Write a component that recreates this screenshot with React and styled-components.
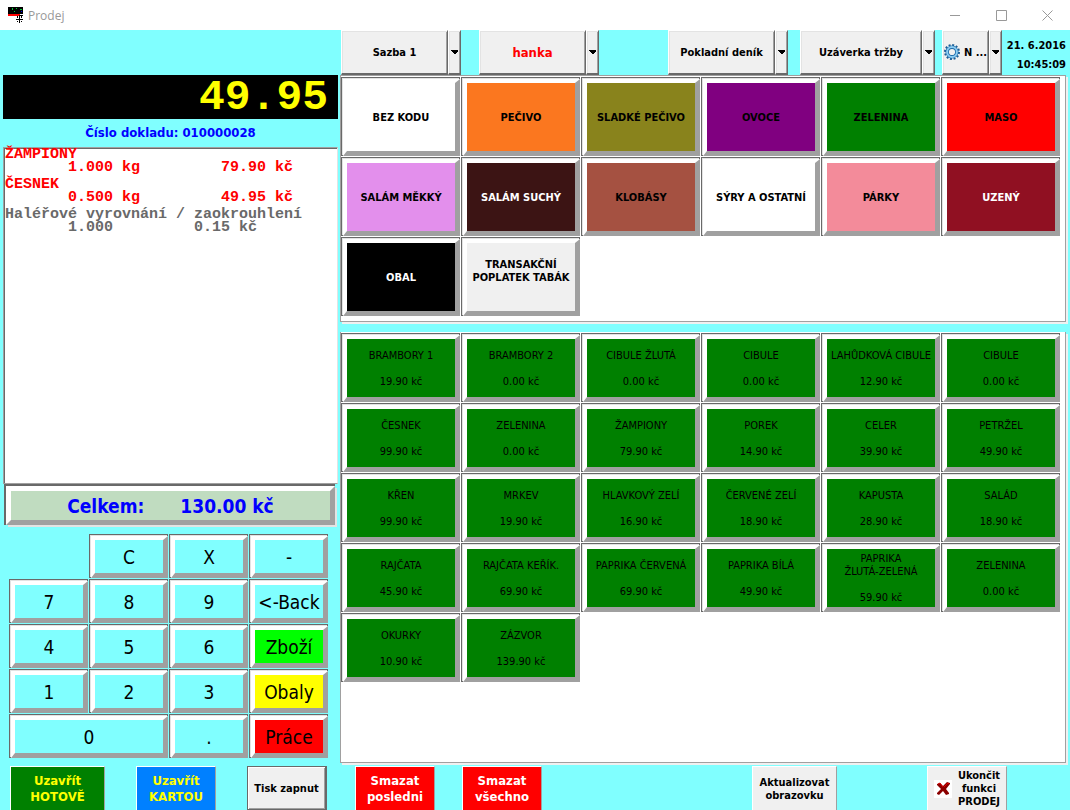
import React from "react";
import styled, { createGlobalStyle } from "styled-components";

const GlobalStyle = createGlobalStyle`
  * {
    box-sizing: border-box;
  }

  body {
    margin: 0;
    background: #80ffff;
    font-family: "DejaVu Sans Condensed", "DejaVu Sans", Tahoma, sans-serif;
    font-size: 11px;
    color: #000;
  }

  button {
    font-family: inherit;
    color: inherit;
    margin: 0;
    padding: 0;
    cursor: pointer;
  }
`;

const Window = styled.div`
  display: flex;
  flex-direction: column;
  min-height: 100vh;
`;

const TitleBar = styled.header`
  display: flex;
  align-items: center;
  height: 30px;
  padding-left: 8px;
  background: #fff;
`;

const Title = styled.h1`
  flex: 1;
  margin: 0;
  padding-left: 4px;
  font-family: "Open Sans", sans-serif;
  font-size: 12px;
  font-weight: 400;
  color: #999;
`;

const WindowButton = styled.button`
  display: flex;
  align-items: center;
  justify-content: center;
  width: 46px;
  height: 28px;
  border: none;
  background: transparent;
`;

const Main = styled.main`
  display: grid;
  grid-template-columns: 340px minmax(0, 1fr);
  flex: 1;
`;

const Left = styled.section`
  display: flex;
  flex-direction: column;
  padding: 45px 2px 8px 3px;
`;

const Right = styled.section`
  display: flex;
  flex-direction: column;
  padding: 0 4px 3px 0;
`;

const Display = styled.output`
  height: 44px;
  padding-right: 10px;
  background: #000;
  color: #ff0;
  font-family: "Liberation Mono", monospace;
  font-size: 43px;
  font-weight: 700;
  line-height: 46px;
  text-align: right;
`;

const DocNumber = styled.h2`
  margin: 0;
  font-size: 13px;
  line-height: 28px;
  color: #00f;
  text-align: center;
`;

const Receipt = styled.ul`
  flex: 1;
  margin: 0;
  padding: 0;
  list-style: none;
  background: #fff;
  border: 1px solid #a0a0a0;
  border-right-color: #e3e3e3;
  box-shadow: inset 1px 1px 0 #696969;
`;

const ReceiptItem = styled.li`
  height: 30px;
  padding-left: 1px;
  color: ${(props) => (props.$muted ? "#696969" : "#f00")};
  font-family: "Liberation Mono", monospace;
  font-size: 15px;
  font-weight: 700;
  line-height: 13px;
  white-space: pre;
`;

const Total = styled.div`
  display: flex;
  align-items: center;
  justify-content: center;
  gap: 36px;
  height: 39px;
  margin: 2px 3px 0;
  border: 5px solid;
  border-color: #fff #a0a0a0 #a0a0a0 #fff;
  background: #c0dcc0;
  box-shadow: -1px -1px 0 1px #696969, 2px 2px 0 #e3e3e3;
  color: #00f;
  font-size: 19px;
  font-weight: 700;
`;

const Keypad = styled.div`
  display: grid;
  grid-template-columns: repeat(4, 77px);
  grid-auto-rows: 42px;
  gap: 3px;
  margin: 11px 0 0 8px;
`;

const Bevel = styled.button`
  border: solid;
  border-width: 4px 5px 5px 4px;
  border-color: #fff #a0a0a0 #a0a0a0 #fff;
  border-radius: 0;
  background: ${(props) => props.$bg || "#80ffff"};
  box-shadow: -1px -1px 0 #e3e3e3, -1px -1px 0 1px #696969;
`;

const Key = styled(Bevel)`
  grid-column: ${(props) => props.$column || "auto"};
  font-size: 19px;
  white-space: nowrap;
`;

const Toolbar = styled.nav`
  display: flex;
  height: 45px;
  padding-left: 1px;
`;

const ToolGroup = styled.div`
  display: flex;
  gap: ${(props) => props.$gap}px;
  margin-left: ${(props) => (props.$end ? "auto" : "0")};
`;

const ToolEnd = styled.div`
  display: flex;
  padding-left: 7px;
`;

const Split = styled.div`
  display: flex;
  width: ${(props) => props.$width}px;
`;

const SplitButton = styled.button`
  display: flex;
  flex: 1;
  align-items: center;
  justify-content: center;
  gap: 4px;
  border: solid #696969;
  border-width: 1px 1px 2px;
  border-top-color: #fff;
  border-left-color: #fff;
  background: #f0f0f0;
  box-shadow: inset 1px 1px 0 #e3e3e3, inset -1px 0 0 #a0a0a0;
  color: ${(props) => props.$color || "#000"};
  font-size: ${(props) => (props.$large ? 13 : 11)}px;
  font-weight: 700;
  white-space: nowrap;
`;

const SplitArrow = styled(SplitButton)`
  flex: 0 0 13px;
`;

const Clock = styled.div`
  width: 64px;
  padding-top: 6px;
  font-size: 11px;
  font-weight: 700;
  line-height: 19px;
  text-align: right;
  white-space: nowrap;
`;

const Panel = styled.div`
  flex: ${(props) => (props.$grow ? "1" : "0 0 auto")};
  display: grid;
  grid-template-columns: repeat(auto-fill, 117px);
  grid-auto-rows: ${(props) => props.$row}px;
  align-content: start;
  gap: 3px;
  padding: 3px 0 5px 2px;
  border: 1px solid #a0a0a0;
  background: #fff;
  box-shadow: 2px 2px 0 #f0f0f0;
`;

const ProductPanel = styled(Panel)`
  border-top: none;
  margin-top: 10px;
`;

const Tile = styled(Bevel)`
  display: flex;
  flex-direction: column;
  align-items: center;
  justify-content: center;
  gap: 13px;
  color: ${(props) => (props.$light ? "#fff" : "#000")};
  font-size: 11px;
  font-weight: ${(props) => (props.$bold ? 700 : 400)};
  line-height: 13px;
  white-space: pre;
`;

const Footer = styled.footer`
  display: grid;
  grid-template-columns: 340px minmax(0, 1fr);
  height: 44px;
`;

const FooterLeft = styled.div`
  display: flex;
  justify-content: space-between;
  padding: 0 13px 0 10px;
`;

const FooterRight = styled.div`
  display: flex;
  justify-content: space-between;
  padding: 0 63px 0 15px;
`;

const FooterGroup = styled.div`
  display: flex;
  gap: ${(props) => props.$gap}px;
`;

const Action = styled.button`
  display: flex;
  align-items: center;
  justify-content: center;
  gap: 6px;
  width: ${(props) => props.$width || 80}px;
  border: solid;
  border-width: 1px 1px 0;
  border-color: #fff #a0a0a0 #a0a0a0 #fff;
  background: ${(props) => props.$bg || "#f0f0f0"};
  color: ${(props) => props.$color || "#000"};
  font-size: ${(props) => (props.$large ? 13 : 11)}px;
  font-weight: 700;
  line-height: ${(props) => (props.$large ? 16 : 13)}px;
  text-align: center;
  white-space: pre;
`;

const PrintAction = styled(Action)`
  border: 1px solid #696969;
  border-right-width: 2px;
  box-shadow: inset 1px 1px 0 #fff, inset -1px -1px 0 #a0a0a0;
`;

const receipt = [
  { name: "ŽAMPIONY", detail: "       1.000 kg         79.90 kč" },
  { name: "ČESNEK", detail: "       0.500 kg         49.95 kč" },
  {
    name: "Haléřové vyrovnání / zaokrouhlení",
    detail: "       1.000         0.15 kč",
    muted: true,
  },
];

const keys = [
  { label: "C", column: "2" },
  { label: "X" },
  { label: "-" },
  { label: "7" },
  { label: "8" },
  { label: "9" },
  { label: "<-Back" },
  { label: "4" },
  { label: "5" },
  { label: "6" },
  { label: "Zboží", bg: "#00ff00" },
  { label: "1" },
  { label: "2" },
  { label: "3" },
  { label: "Obaly", bg: "#ffff00" },
  { label: "0", column: "span 2" },
  { label: "." },
  { label: "Práce", bg: "#ff0000" },
];

const categories = [
  { name: "BEZ KODU", bg: "#fff" },
  { name: "PEČIVO", bg: "#fb771f" },
  { name: "SLADKÉ PEČIVO", bg: "#89831c" },
  { name: "OVOCE", bg: "#800080" },
  { name: "ZELENINA", bg: "#008000" },
  { name: "MASO", bg: "#ff0000" },
  { name: "SALÁM MĚKKÝ", bg: "#e38fec" },
  { name: "SALÁM SUCHÝ", bg: "#3c1414", light: true },
  { name: "KLOBÁSY", bg: "#a55141" },
  { name: "SÝRY A OSTATNÍ", bg: "#fff" },
  { name: "PÁRKY", bg: "#f38b9a" },
  { name: "UZENÝ", bg: "#901022", light: true },
  { name: "OBAL", bg: "#000", light: true },
  { name: "TRANSAKČNÍ\nPOPLATEK TABÁK\n ", bg: "#f0f0f0" },
];

const products = [
  ["BRAMBORY 1", "19.90"],
  ["BRAMBORY 2", "0.00"],
  ["CIBULE ŽLUTÁ", "0.00"],
  ["CIBULE", "0.00"],
  ["LAHŮDKOVÁ CIBULE", "12.90"],
  ["CIBULE", "0.00"],
  ["ČESNEK", "99.90"],
  ["ZELENINA", "0.00"],
  ["ŽAMPIONY", "79.90"],
  ["POREK", "14.90"],
  ["CELER", "39.90"],
  ["PETRŽEL", "49.90"],
  ["KŘEN", "99.90"],
  ["MRKEV", "19.90"],
  ["HLAVKOVÝ ZELÍ", "16.90"],
  ["ČERVENÉ ZELÍ", "18.90"],
  ["KAPUSTA", "28.90"],
  ["SALÁD", "18.90"],
  ["RAJČATA", "45.90"],
  ["RAJČATA KEŘÍK.", "69.90"],
  ["PAPRIKA ČERVENÁ", "69.90"],
  ["PAPRIKA BÍLÁ", "49.90"],
  ["PAPRIKA\nŽLUTÁ-ZELENÁ", "59.90"],
  ["ZELENINA", "0.00"],
  ["OKURKY", "10.90"],
  ["ZÁZVOR", "139.90"],
];

const AppIcon = () => (
  <svg width="16" height="18" viewBox="0 0 16 18" shapeRendering="crispEdges">
    <path d="M0 1h15v7H0zM0 9h15v1H0z" fill="#000" />
    <path d="M4 2h1v2H4zM8 2h1v1H8zM12 3h2v1h-2zM6 5h1v1H6z" fill="#0c3" />
    <path d="M13 5h1v1h-1z" fill="#00f" />
    <path d="M0 8h12v2H0z" fill="#f00" />
    <path
      d="M11 9h1v8h-1zM8 13h7v1H8zM9 10h1v2H9zM13 10h1v2h-1zM9 15h1v1H9zM13 15h1v1h-1z"
      fill="#000"
    />
  </svg>
);

const GearIcon = () => (
  <svg width="16" height="16" viewBox="0 0 16 16">
    <circle
      cx="8"
      cy="8"
      r="7"
      fill="none"
      stroke="#1b5e96"
      strokeWidth="2"
      strokeDasharray="2 1.665"
    />
    <circle cx="8" cy="8" r="4.8" fill="#f0f0f0" stroke="#1c69a8" strokeWidth="3.4" />
    <circle cx="8" cy="8" r="4.9" fill="none" stroke="#8ccdf2" strokeWidth="2" />
  </svg>
);

const CrossIcon = () => (
  <svg width="18" height="18" viewBox="0 0 18 18">
    <path d="M0 0h18v18H0z" fill="#fff" />
    <path
      d="M3 4l3-1 3 3 4-4 3 1v1l-4 5 3 4v1l-3 1-3-4-4 4-2-1v-1l4-4-4-4z"
      fill="#8b0000"
    />
    <path d="M4 4l2-1 3 4M10 7l4-4 1 1" fill="none" stroke="#e00000" />
  </svg>
);

const Caret = () => (
  <svg width="7" height="4" viewBox="0 0 7 4" shapeRendering="crispEdges">
    <path d="M0 0h7v1L4 4H3L0 1z" fill="#000" />
  </svg>
);

const SplitMenu = ({ label, width, color, large, icon }) => (
  <Split $width={width}>
    <SplitButton $color={color} $large={large}>
      {icon}
      {label}
    </SplitButton>
    <SplitArrow aria-label={`${label} menu`}>
      <Caret />
    </SplitArrow>
  </Split>
);

const App = () => {
  return (
    <Window>
      <GlobalStyle />
      <TitleBar>
        <AppIcon />
        <Title>Prodej</Title>
        <WindowButton aria-label="Minimalizovat">
          <svg width="11" height="11" viewBox="0 0 11 11">
            <path d="M0 5.5h10" stroke="#999" />
          </svg>
        </WindowButton>
        <WindowButton aria-label="Maximalizovat">
          <svg width="11" height="11" viewBox="0 0 11 11">
            <path d="M.5 .5h10v10h-10z" fill="none" stroke="#999" />
          </svg>
        </WindowButton>
        <WindowButton aria-label="Zavřít">
          <svg width="11" height="11" viewBox="0 0 11 11">
            <path d="M.5 .5l10 10M10.5 .5l-10 10" stroke="#999" />
          </svg>
        </WindowButton>
      </TitleBar>

      <Main>
        <Left>
          <Display>49.95</Display>
          <DocNumber>Číslo dokladu: 010000028</DocNumber>
          <Receipt>
            {receipt.map((item) => (
              <ReceiptItem key={item.name} $muted={item.muted}>
                {item.name + "\n" + item.detail}
              </ReceiptItem>
            ))}
          </Receipt>
          <Total>
            <span>Celkem:</span>
            <span>130.00 kč</span>
          </Total>
          <Keypad>
            {keys.map((key) => (
              <Key key={key.label} $bg={key.bg} $column={key.column}>
                {key.label}
              </Key>
            ))}
          </Keypad>
        </Left>

        <Right>
          <Toolbar>
            <ToolGroup $gap={18}>
              <SplitMenu label="Sazba 1" width={120} />
              <SplitMenu label="hanka" width={120} color="#f00" large />
            </ToolGroup>
            <ToolGroup $gap={12} $end>
              <SplitMenu label="Pokladní deník" width={120} />
              <SplitMenu label="Uzáverka tržby" width={135} />
            </ToolGroup>
            <ToolEnd>
              <SplitMenu label="N ..." width={60} icon={<GearIcon />} />
              <Clock>
                21. 6.2016
                <br />
                10:45:09
              </Clock>
            </ToolEnd>
          </Toolbar>
          <Panel $row={77}>
            {categories.map((cat) => (
              <Tile key={cat.name} $bg={cat.bg} $light={cat.light} $bold>
                {cat.name}
              </Tile>
            ))}
          </Panel>
          <ProductPanel $row={67} $grow>
            {products.map(([name, price], index) => (
              <Tile key={index} $bg="#008000">
                <span>{name}</span>
                <span>{price} kč</span>
              </Tile>
            ))}
          </ProductPanel>
        </Right>
      </Main>

      <Footer>
        <FooterLeft>
          <Action $bg="#008000" $color="#ff0" $width={95} $large>
            {"Uzavřít\nHOTOVĚ"}
          </Action>
          <Action $bg="#0080ff" $color="#ff0" $large>
            {"Uzavřít\nKARTOU"}
          </Action>
          <PrintAction>Tisk zapnut</PrintAction>
        </FooterLeft>
        <FooterRight>
          <FooterGroup $gap={27}>
            <Action $bg="#f00" $color="#fff" $large>
              {"Smazat\nposledni"}
            </Action>
            <Action $bg="#f00" $color="#fff" $large>
              {"Smazat\nvšechno"}
            </Action>
          </FooterGroup>
          <FooterGroup $gap={90}>
            <Action $width={85}>{"Aktualizovat\nobrazovku"}</Action>
            <Action>
              <CrossIcon />
              {"Ukončit\nfunkci\nPRODEJ"}
            </Action>
          </FooterGroup>
        </FooterRight>
      </Footer>
    </Window>
  );
};

export default App;
